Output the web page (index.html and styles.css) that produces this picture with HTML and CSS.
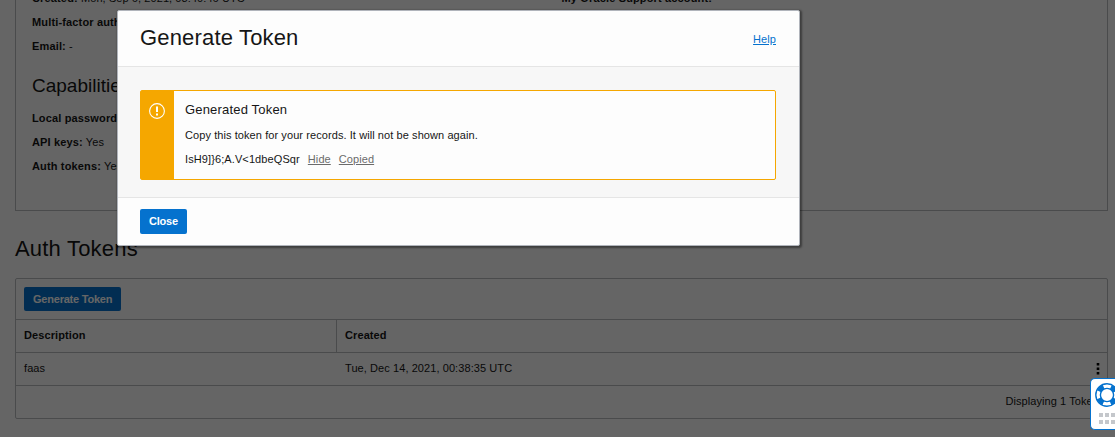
FILE: index.html
```html
<!DOCTYPE html>
<html lang="en">
<head>
<meta charset="utf-8">
<title>Auth Tokens</title>
<link rel="stylesheet" href="styles.css">
</head>
<body>
<main class="page">
  <section class="details">
    <div class="column">
      <p class="row"><b>Created:</b> <span>Mon, Sep 6, 2021, 03:40:46 UTC</span></p>
      <p class="row"><b>Multi-factor auth</b></p>
      <p class="row"><b>Email:</b> <span>-</span></p>
      <h2 class="subheading">Capabilities</h2>
      <p class="row"><b>Local password:</b></p>
      <p class="row"><b>API keys:</b> <span>Yes</span></p>
      <p class="row"><b>Auth tokens:</b> <span>Yes</span></p>
    </div>
    <div class="column">
      <p class="row"><b>My Oracle Support account:</b></p>
    </div>
  </section>
  <h1 class="heading">Auth Tokens</h1>
  <section class="tokens">
    <div class="toolbar"><button class="button">Generate Token</button></div>
    <div class="table-row table-head"><div class="cell">Description</div><div class="cell">Created</div></div>
    <div class="table-row">
      <div class="cell">faas</div><div class="cell">Tue, Dec 14, 2021, 00:38:35 UTC</div>
      <svg class="kebab" viewBox="0 0 4 12"><path d="M.7 0h2.6v2.4H.7zM.7 4.5h2.6v2.4H.7zM.7 9h2.6v2.4H.7z"/></svg>
    </div>
    <div class="table-foot">Displaying 1 Token</div>
  </section>
</main>
<div class="overlay"></div>
<div class="dialog" role="dialog">
  <header class="dialog-head"><h2 class="dialog-title">Generate Token</h2><a class="help">Help</a></header>
  <div class="dialog-body">
    <div class="notice">
      <div class="notice-mark">
        <svg class="alert" viewBox="0 0 16 16"><circle cx="8" cy="8" r="7.4"/><path d="M8 3.5v5.5M8 10.5v2"/></svg>
      </div>
      <div class="notice-text">
        <h3 class="notice-title">Generated Token</h3>
        <p class="row">Copy this token for your records. It will not be shown again.</p>
        <p class="row token-row"><span class="token">IsH9]}6;A.V&lt;1dbeQSqr</span><a class="action">Hide</a><a class="action">Copied</a></p>
      </div>
    </div>
  </div>
  <footer class="dialog-foot"><button class="button close">Close</button></footer>
</div>
<aside class="support">
  <svg class="buoy" viewBox="0 0 24 24">
    <circle class="buoy-edge" cx="12" cy="12" r="11.2"/>
    <circle class="buoy-ring" cx="12" cy="12" r="8.8"/>
    <circle class="buoy-edge" cx="12" cy="12" r="6.6"/>
  </svg>
  <svg class="grip" viewBox="0 0 19 11"><path d="M0 0h4v4H0zM6 0h4v4H6zM12 0h4v4h-4zM0 7h4v4H0zM6 7h4v4H6zM12 7h4v4h-4z"/></svg>
</aside>
</body>
</html>
```
FILE: styles.css
```css
* { box-sizing: border-box; margin: 0; padding: 0; }
html, body { height: 437px; overflow: hidden; }
body {
  background: #fdfdfd;
  color: #161616;
  font: 11px/24px "Liberation Sans", Arial, sans-serif;
  letter-spacing: 0.08px;
}
b { letter-spacing: 0.15px; }
.page { display: flow-root; padding: 0 7px 0 15px; }
.details {
  display: flex;
  width: 1093px;
  height: 226px;
  margin-top: -15px;
  padding: 0 16px;
  border: 1px solid #b9bbbf;
}
.column { width: 530px; }
.row { white-space: nowrap; }
.subheading { height: 48px; font-size: 19px; font-weight: 400; line-height: 55px; letter-spacing: 0; }
.heading { height: 67px; font-size: 22px; font-weight: 400; line-height: 75px; letter-spacing: 0.2px; }
.tokens { width: 1093px; border: 1px solid #b9bbbf; border-radius: 2px; }
.toolbar { height: 40px; padding: 8px; }
.button {
  display: block;
  height: 24px;
  padding: 0 9px;
  border: 0;
  border-radius: 2px;
  background: #0572ce;
  color: #fff;
  font: bold 11px/24px "Liberation Sans", Arial, sans-serif;
  letter-spacing: -0.22px;
}
.table-row { position: relative; display: flex; height: 33px; border-top: 1px solid #b9bbbf; line-height: 31px; }
.table-head { font-weight: 700; letter-spacing: 0.1px; }
.cell { width: 321px; padding-left: 8px; }
.table-head .cell:first-child { border-right: 1px solid #b9bbbf; }
.kebab { width: 4px; height: 12px; margin: 10px 7px 0 auto; fill: #000; }
.table-foot { height: 33px; padding-right: 8px; border-top: 1px solid #b9bbbf; line-height: 31px; text-align: right; }
.overlay { position: absolute; inset: 0; background: rgba(0, 0, 0, 0.6); }
.dialog {
  position: absolute;
  left: 117px;
  top: 10px;
  width: 683px;
  height: 236px;
  border: 1px solid #b0b4bb;
  border-radius: 2px;
  background: #fdfdfd;
  box-shadow: 1px 1px 2px 1px rgba(0, 0, 0, 0.4);
}
.dialog-head { display: flex; justify-content: space-between; height: 56px; padding: 0 23px 0 22px; border-bottom: 1px solid #e5e5e5; }
.dialog-title { font-size: 22px; font-weight: 400; line-height: 53px; letter-spacing: 0.17px; }
.help { color: #0572ce; line-height: 56px; text-decoration: underline; }
.dialog-body { height: 131px; padding: 23px 23px 17px 22px; border-bottom: 1px solid #e5e5e5; background: #f7f7f7; }
.notice { display: flex; height: 90px; border: 1px solid #f5a700; border-radius: 2px; background: #fdfdfd; }
.notice-mark { width: 33px; padding: 12px 0 0 8px; background: #f5a700; }
.alert { display: block; width: 16px; height: 16px; fill: none; stroke: #fff; stroke-width: 1.1; }
.alert path { stroke-width: 2; }
.notice-text { padding: 6px 0 0 11px; }
.notice-title { height: 26px; font-size: 13px; font-weight: 400; line-height: 25px; letter-spacing: 0.18px; }
.token-row { display: flex; gap: 8px; }
.token { letter-spacing: 0.1px; }
.action { color: #6b6b6b; text-decoration: underline; }
.dialog-foot { padding: 11px 22px; }
.close { height: 25px; padding-bottom: 1px; }
.support {
  position: absolute;
  left: 1090px;
  top: 378px;
  width: 25px;
  height: 52px;
  padding: 4px 0 0 4px;
  overflow: hidden;
  border: 1px solid #0572ce;
  border-right: 0;
  border-radius: 5px 0 0 5px;
  background: #fff;
}
.buoy { display: block; width: 24px; height: 24px; fill: none; stroke: #0572ce; }
.buoy-edge { stroke-width: 1.4; }
.buoy-ring { stroke-width: 4.6; stroke-dasharray: 6.4 7.423; stroke-dashoffset: -3.71; }
.grip { display: block; width: 19px; height: 11px; margin: 6px 0 0 4px; fill: #c4c7cb; }
```
